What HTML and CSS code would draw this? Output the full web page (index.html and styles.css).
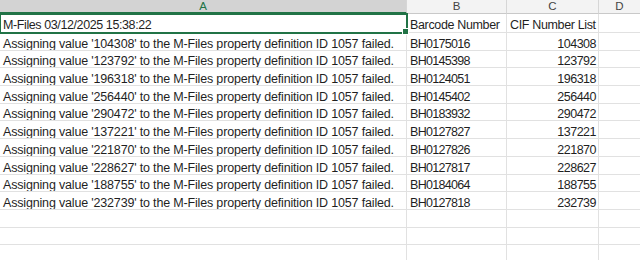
FILE: index.html
```html
<!DOCTYPE html>
<html>
<head>
<meta charset="utf-8">
<link rel="stylesheet" href="styles.css">
</head>
<body>
<div class="sheet">
  <div class="hd sel-hd">A</div><div class="hd">B</div><div class="hd">C</div><div class="hd last">D</div>

  <div class="c r1 sel">M-Files 03/12/2025 15:38:22</div><div class="c r1">Barcode Number</div><div class="c r1">CIF Number List</div><div class="c r1 last"></div>

  <div class="c">Assigning value '104308' to the M-Files property definition ID 1057 failed.</div><div class="c code">BH0175016</div><div class="c num">104308</div><div class="c last"></div>
  <div class="c">Assigning value '123792' to the M-Files property definition ID 1057 failed.</div><div class="c code">BH0145398</div><div class="c num">123792</div><div class="c last"></div>
  <div class="c">Assigning value '196318' to the M-Files property definition ID 1057 failed.</div><div class="c code">BH0124051</div><div class="c num">196318</div><div class="c last"></div>
  <div class="c">Assigning value '256440' to the M-Files property definition ID 1057 failed.</div><div class="c code">BH0145402</div><div class="c num">256440</div><div class="c last"></div>
  <div class="c">Assigning value '290472' to the M-Files property definition ID 1057 failed.</div><div class="c code">BH0183932</div><div class="c num">290472</div><div class="c last"></div>
  <div class="c">Assigning value '137221' to the M-Files property definition ID 1057 failed.</div><div class="c code">BH0127827</div><div class="c num">137221</div><div class="c last"></div>
  <div class="c">Assigning value '221870' to the M-Files property definition ID 1057 failed.</div><div class="c code">BH0127826</div><div class="c num">221870</div><div class="c last"></div>
  <div class="c">Assigning value '228627' to the M-Files property definition ID 1057 failed.</div><div class="c code">BH0127817</div><div class="c num">228627</div><div class="c last"></div>
  <div class="c">Assigning value '188755' to the M-Files property definition ID 1057 failed.</div><div class="c code">BH0184064</div><div class="c num">188755</div><div class="c last"></div>
  <div class="c">Assigning value '232739' to the M-Files property definition ID 1057 failed.</div><div class="c code">BH0127818</div><div class="c num">232739</div><div class="c last"></div>

  <div class="c"></div><div class="c"></div><div class="c"></div><div class="c last"></div>
  <div class="c"></div><div class="c"></div><div class="c"></div><div class="c last"></div>
  <div class="c"></div><div class="c"></div><div class="c"></div><div class="c last"></div>
</div>
</body>
</html>
```
FILE: styles.css
```css
html, body {
  margin: 0;
  padding: 0;
  background: #ffffff;
  overflow: hidden;
}
.sheet {
  display: grid;
  grid-template-columns: 407px 100px 92px 1fr;
  grid-template-rows: 14px 19px;
  grid-auto-rows: 17.7px;
  font-family: "Liberation Sans", Arial, sans-serif;
  font-size: 12.5px;
  color: #1f1f1f;
  width: 640px;
}
.hd {
  background: #f3f3f3;
  border-right: 1px solid #d6d6d6;
  border-bottom: 1px solid #c9c9c9;
  color: #444444;
  font-size: 11.5px;
  line-height: 13px;
  text-align: center;
  box-sizing: border-box;
}
.hd.last { border-right: none; }
.sel-hd {
  background: #d3d3d3;
  color: #217346;
  border-bottom: 2px solid #217346;
}
.c {
  box-sizing: border-box;
  border-right: 1px solid #e1e1e1;
  border-bottom: 1px solid #e1e1e1;
  padding: 0 2px 0 3px;
  white-space: nowrap;
  overflow: hidden;
  display: flex;
  align-items: flex-end;
  line-height: 12px;
  letter-spacing: -0.17px;
}
.c.last { border-right: none; }
.r1 { letter-spacing: -0.35px; padding-bottom: 1px; }
.code { letter-spacing: -0.7px; }
.num { justify-content: flex-end; letter-spacing: -0.5px; }
.sel {
  position: relative;
  overflow: visible;
  outline: 2px solid #217346;
  outline-offset: -1px;
  z-index: 2;
  letter-spacing: -0.4px;
}
.sel::after {
  content: "";
  position: absolute;
  right: -3px;
  bottom: -3px;
  width: 5px;
  height: 5px;
  background: #217346;
  border: 1px solid #ffffff;
}
```
